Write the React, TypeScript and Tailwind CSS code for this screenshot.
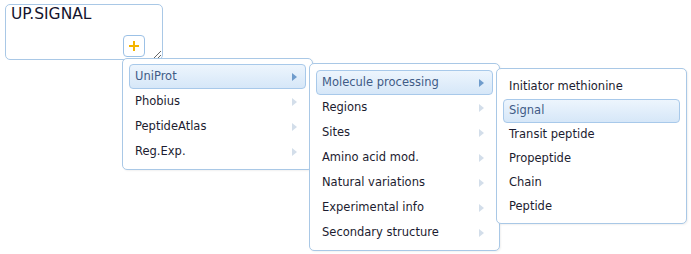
import React from "react";

type Item = { label: string; active?: boolean; sub?: boolean };

const menu1: Item[] = [
  { label: "UniProt", active: true, sub: true },
  { label: "Phobius", sub: true },
  { label: "PeptideAtlas", sub: true },
  { label: "Reg.Exp.", sub: true },
];
const menu2: Item[] = [
  { label: "Molecule processing", active: true, sub: true },
  { label: "Regions", sub: true },
  { label: "Sites", sub: true },
  { label: "Amino acid mod.", sub: true },
  { label: "Natural variations", sub: true },
  { label: "Experimental info", sub: true },
  { label: "Secondary structure", sub: true },
];
const menu3: Item[] = [
  { label: "Initiator methionine" },
  { label: "Signal", active: true },
  { label: "Transit peptide" },
  { label: "Propeptide" },
  { label: "Chain" },
  { label: "Peptide" },
];

function Arrow({ active }: { active?: boolean }) {
  return (
    <svg width="5" height="8" viewBox="0 0 5 8" className="shrink-0">
      <path d="M0 0 L5 4 L0 8 Z" fill={active ? "#6f9ccc" : "#d3deea"} />
    </svg>
  );
}

function Menu({ items, className, itemH }: { items: Item[]; className: string; itemH: string }) {
  return (
    <div
      className={`absolute flex w-[191px] flex-col rounded-[5px] border border-[#a9c8e6] bg-white px-[6px] shadow-[1px_1px_2px_rgba(0,0,0,0.06)] ${className}`}
    >
      {items.map((it) => (
        <div
          key={it.label}
          className={`flex ${itemH} items-center justify-between rounded-[4px] border pl-[5px] pr-[8px] ${
            it.active
              ? "border-[#a8c9ea] bg-gradient-to-b from-[#edf5fd] to-[#d6e7f8] text-[#3f5b86]"
              : "border-transparent text-[#1c1c30]"
          }`}
        >
          <span>{it.label}</span>
          {it.sub && <Arrow active={it.active} />}
        </div>
      ))}
    </div>
  );
}

export default function App() {
  return (
    <div
      className="relative h-[254px] w-[691px] overflow-hidden bg-white"
      style={{ fontFamily: '"DejaVu Sans", Verdana, sans-serif' }}
    >
      <div className="relative ml-[5px] mt-[4px] h-[56px] w-[158px]">
        <textarea
          readOnly
          defaultValue="UP.SIGNAL"
          className="block h-[56px] w-[158px] resize rounded-[5px] border border-[#a9c8e6] bg-white pl-[5px] pr-[4px] pt-0 text-[15.5px] leading-[18px] text-[#14142e] outline-none"
          style={{ fontFamily: '"DejaVu Sans", Verdana, sans-serif' }}
        />
        <button className="absolute left-[118px] top-[31px] flex h-[22px] w-[22px] items-center justify-center rounded-[4px] border border-[#9cc1e6] bg-white">
          <svg width="10" height="10" viewBox="0 0 10 10">
            <path d="M5 0 V10 M0 5 H10" stroke="#f4b400" strokeWidth="2" />
          </svg>
        </button>
      </div>
      <div className="text-[11.5px]">
        <Menu items={menu1} className="left-[122px] top-[58px] pt-[5px] pb-[5px]" itemH="h-[25px]" />
        <Menu items={menu2} className="left-[309px] top-[63px] pt-[6px] pb-[5px]" itemH="h-[25px]" />
        <Menu items={menu3} className="left-[496px] top-[68px] pt-[6px] pb-[4px]" itemH="h-[24px]" />
      </div>
    </div>
  );
}
